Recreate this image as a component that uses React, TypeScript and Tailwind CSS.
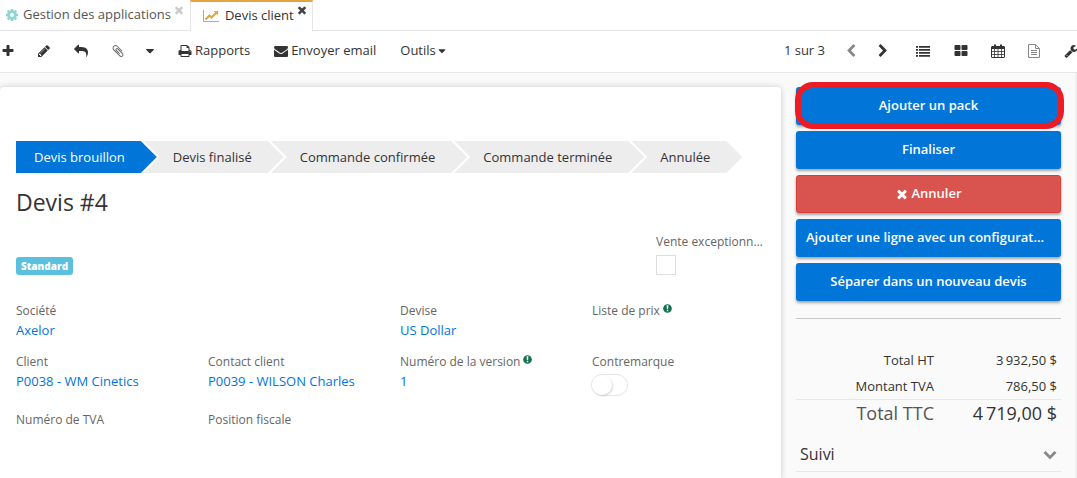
import { useState } from 'react';
import type { ReactNode } from 'react';
import clsx from 'clsx';

const paths = {
  times:
    'M1490 1322q0 40-28 68l-136 136q-28 28-68 28t-68-28l-294-294-294 294q-28 28-68 28t-68-28l-136-136q-28-28-28-68t28-68l294-294-294-294q-28-28-28-68t28-68l136-136q28-28 68-28t68 28l294 294 294-294q28-28 68-28t68 28l136 136q28 28 28 68t-28 68l-294 294 294 294q28 28 28 68z',
  plus: 'M1600 736v192q0 40-28 68t-68 28h-416v416q0 40-28 68t-68 28h-192q-40 0-68-28t-28-68v-416h-416q-40 0-68-28t-28-68v-192q0-40 28-68t68-28h416v-416q0-40 28-68t68-28h192q40 0 68 28t28 68v416h416q40 0 68 28t28 68z',
  pencil:
    'M491 1536l91-91-235-235-91 91v107h128v128h107zm523-928q0-22-22-22-10 0-17 7l-542 542q-7 7-7 17 0 22 22 22 10 0 17-7l542-542q7-7 7-17zm-54-192l416 416-832 832h-416v-416zm683 96q0 53-37 90l-166 166-416-416 166-165q36-38 90-38 53 0 91 38l235 234q37 39 37 91z',
  forward:
    'M1792 640q0 26-19 45l-512 512q-19 19-45 19t-45-19-19-45v-256h-224q-98 0-175.5 6t-154 21.5-133 42.5-105.5 69.5-80 101-48.5 138.500-17.500 181q0 55 5 123 0 6 2.500 23.500t2.500 26.500q0 15-8.500 25t-23.500 10q-16 0-28-17-7-9-13-22t-13.500-30-10.500-24q-127-285-127-451 0-199 53-333 162-403 875-403h224v-256q0-26 19-45t45-19 45 19l512 512q19 19 19 45z',
  clip: 'M1596 1385q0 117-79 196t-196 79q-135 0-235-100l-777-776q-113-115-113-271 0-159 110-270t269-111q158 0 273 113l605 606q10 10 10 22 0 16-30.500 46.500t-46.500 30.500q-13 0-23-10l-606-607q-79-77-181-77-106 0-179 75t-73 181q0 105 76 181l776 777q63 63 145 63 64 0 106-42t42-106q0-82-63-145l-581-581q-26-24-60-24-29 0-48 19t-19 48q0 32 25 59l410 410q10 10 10 22 0 16-31 47t-47 31q-12 0-22-10l-410-410q-63-61-63-149 0-82 57-139t139-57q88 0 149 63l581 581q100 98 100 235z',
  print:
    'M448 1536h896v-256h-896v256zm0-640h896v-384h-160q-40 0-68-28t-28-68v-160h-640v640zm1152 64q0-26-19-45t-45-19-45 19-19 45 19 45 45 19 45-19 19-45zm128 0v416q0 13-9.500 22.500t-22.500 9.500h-224v160q0 40-28 68t-68 28h-960q-40 0-68-28t-28-68v-160h-224q-13 0-22.500-9.500t-9.500-22.500v-416q0-79 56.500-135.500t135.500-56.500h64v-544q0-40 28-68t68-28h672q40 0 88 20t76 48l152 152q28 28 48 76t20 88v256h64q79 0 135.500 56.500t56.500 135.500z',
  mail: 'M1792 710v794q0 66-47 113t-113 47h-1472q-66 0-113-47t-47-113v-794q44 49 101 87 362 246 497 345 57 42 92.500 65.500t94.500 48 110 24.500h2q51 0 110-24.500t94.500-48 92.500-65.500q170-123 498-345 57-39 100-87zm0-294q0 79-49 151t-122 123q-376 261-468 325-10 7-42.500 31t-54 38.500-52 32.500-57.500 27-50 9h-2q-23 0-50-9t-57.500-27-52-32.500-54-38.500-42.500-31q-91-64-262-182.500t-205-142.500q-62-42-117-115.500t-55-136.500q0-78 41.500-130t118.500-52h1472q65 0 112.500 47t47.500 113z',
  caret: 'M1408 704q0 26-19 45l-448 448q-19 19-45 19t-45-19l-448-448q-19-19-19-45t19-45 45-19h896q26 0 45 19t19 45z',
  left: 'M1427 301l-531 531 531 531q19 19 19 45t-19 45l-166 166q-19 19-45 19t-45-19l-742-742q-19-19-19-45t19-45l742-742q19-19 45-19t45 19l166 166q19 19 19 45t-19 45z',
  down: 'M1683 808l-742 741q-19 19-45 19t-45-19l-742-741q-19-19-19-45.500t19-45.500l166-165q19-19 45-19t45 19l531 531 531-531q19-19 45-19t45 19l166 165q19 19 19 45.500t-19 45.500z',
  list: 'M0 256h256v232h-256zM384 256h1408v232h-1408zM0 640h256v232h-256zM384 640h1408v232h-1408zM0 1024h256v232h-256zM384 1024h1408v232h-1408zM0 1408h256v232h-256zM384 1408h1408v232h-1408z',
  grid: 'M832 1024v384q0 52-38 90t-90 38h-512q-52 0-90-38t-38-90v-384q0-52 38-90t90-38h512q52 0 90 38t38 90zm0-768v384q0 52-38 90t-90 38h-512q-52 0-90-38t-38-90v-384q0-52 38-90t90-38h512q52 0 90 38t38 90zm896 768v384q0 52-38 90t-90 38h-512q-52 0-90-38t-38-90v-384q0-52 38-90t90-38h512q52 0 90 38t38 90zm0-768v384q0 52-38 90t-90 38h-512q-52 0-90-38t-38-90v-384q0-52 38-90t90-38h512q52 0 90 38t38 90z',
  wrench:
    'M448 1472q0-26-19-45t-45-19-45 19-19 45 19 45 45 19 45-19 19-45zm644-420l-682 682q-37 37-90 37-52 0-91-37l-106-108q-38-36-38-90 0-53 38-91l681-681q39 98 114.500 173.500t173.500 114.500zm634-435q0 39-23 106-47 134-164.500 217.500t-258.500 83.500q-185 0-316.500-131.500t-131.500-316.500 131.500-316.500 316.500-131.500q58 0 121.500 16.500t107.500 46.500q16 11 16 28t-16 28l-293 169v224l193 107q5-3 79-48.500t135.500-81 70.500-35.500q15 0 23.500 10t8.500 25z',
};

type IconProps = { name: keyof typeof paths; className?: string };

const Icon = ({ name, className = 'size-3.5' }: IconProps) => (
  <svg
    viewBox="0 0 1792 1792"
    fill="currentColor"
    aria-hidden="true"
    className={clsx('shrink-0', className)}
  >
    <path d={paths[name]} />
  </svg>
);

const GearIcon = () => (
  <svg viewBox="0 0 14 14" className="size-3.5 shrink-0 text-[#8fd6d2]" aria-hidden="true">
    <g stroke="currentColor" strokeWidth="2.600">
      <path d="M7 1v12M1 7h12M2.700 2.700l8.600 8.600M11.300 2.700l-8.600 8.600" />
    </g>
    <circle cx="7" cy="7" r="4.800" fill="currentColor" />
    <circle cx="7" cy="7" r="2" fill="#fff" />
  </svg>
);

const ChartIcon = () => (
  <svg viewBox="0 0 2048 1792" fill="currentColor" className="h-3.5 w-4 shrink-0 text-[#e2a53f]" aria-hidden="true">
    <path d="M2048 1536v128h-2048v-1536h128v1408h1920zm-128-1248v435q0 21-19.500 29.500t-35.500-7.500l-121-121-633 633q-10 10-23 10t-23-10l-233-233-416 416-192-192 585-585q10-10 23-10t23 10l233 233 464-464-121-121q-16-16-7.500-35.500t29.500-19.500h435q14 0 23 9t9 23z" />
  </svg>
);

const CalendarIcon = () => (
  <svg viewBox="0 0 14 14" fill="none" stroke="currentColor" className="size-3.5" aria-hidden="true">
    <rect x="0.500" y="2.500" width="13" height="11" rx="0.500" />
    <path d="M0.500 3.500h13M0.500 4.500h13" />
    <path d="M3.500 5v8.500M7 5v8.500M10.500 5v8.500M1 7.500h12M1 10.500h12" strokeWidth="0.800" />
    <path d="M4 0.500v3M10 0.500v3" strokeWidth="2" />
  </svg>
);

const FileIcon = () => (
  <svg viewBox="0 0 14 14" fill="none" stroke="currentColor" className="size-3.5" aria-hidden="true">
    <path d="M1.500 0.500h7l4 4v9h-11zM8.500 0.500v4h4M4 6.500h6M4 8.500h6M4 10.500h6" />
  </svg>
);

const InfoIcon = () => (
  <svg viewBox="0 0 10 10" className="mb-1.5 ml-[3px] inline size-[9px]" aria-hidden="true">
    <circle cx="5" cy="5" r="4.800" fill="#12734f" />
    <path d="M4 1.500h2l-.3 4h-1.400zM4.200 6.500h1.600v1.600h-1.600z" fill="#fff" />
  </svg>
);

const steps = ['Devis finalisé', 'Commande confirmée', 'Commande terminée', 'Annulée'];

const totals = [
  { label: 'Total HT', value: '3\u2009932,50 $' },
  { label: 'Montant TVA', value: '786,50 $' },
];

type FieldProps = { label: string; info?: boolean; className?: string; children?: ReactNode };

const Field = ({ label, info, className, children }: FieldProps) => (
  <div className={clsx('col-span-3', className)}>
    <div className="text-xs leading-5 text-[#666]">
      {label}
      {info && <InfoIcon />}
    </div>
    {children}
  </div>
);

const Link = ({ children }: { children: ReactNode }) => (
  <a href="#" className="block text-[13px] leading-[18px] text-[#0275d8]">
    {children}
  </a>
);

const ToolButton = ({ label, className, children }: { label: string; className?: string; children: ReactNode }) => (
  <button type="button" aria-label={label} className={clsx('flex w-4 justify-center', className)}>
    {children}
  </button>
);

const ActionButton = ({ danger, children }: { danger?: boolean; children: ReactNode }) => (
  <button
    type="button"
    className={clsx(
      'h-[38px] w-full truncate rounded-[3px] px-2.5 text-[13px] font-semibold text-white shadow-[0_2px_3px_rgba(0,0,0,0.35)]',
      danger ? 'border border-[#d43f3a] bg-[#d9534f]' : 'bg-[#0275d8]',
    )}
  >
    {children}
  </button>
);

const Tabs = () => (
  <nav className="flex h-[31px] text-[13px]">
    <div className="flex border-b border-[#e5e5e5] px-[5px]">
      <a href="#" className="flex items-center gap-1 text-[#555]">
        <GearIcon />
        Gestion des applications
      </a>
      <button type="button" aria-label="Fermer Gestion des applications" className="ml-0.5 h-5 text-[#ccc]">
        <Icon name="times" className="size-3" />
      </button>
    </div>
    <div className="flex border-x border-t-2 border-x-[#e5e5e5] border-t-[#e2a53f] pl-3 pr-1">
      <a href="#" className="flex items-center gap-1.5 pb-0.5 text-[#333]">
        <ChartIcon />
        Devis client
      </a>
      <button type="button" aria-label="Fermer Devis client" className="ml-0.5 h-4 text-[#444]">
        <Icon name="times" className="size-3" />
      </button>
    </div>
    <div className="flex-1 border-b border-[#e5e5e5]" />
  </nav>
);

const Toolbar = () => (
  <div className="flex h-[42px] items-center justify-between overflow-hidden border-b border-[#e8e8e8] pb-0.5 text-[13px]">
    <div className="flex items-center">
      <ToolButton label="Nouveau"><Icon name="plus" /></ToolButton>
      <ToolButton label="Modifier" className="ml-5"><Icon name="pencil" /></ToolButton>
      <ToolButton label="Retour" className="ml-[21px]"><Icon name="forward" className="size-3.5 -scale-x-100" /></ToolButton>
      <ToolButton label="Pièces jointes" className="ml-[21px] text-[#666]"><Icon name="clip" /></ToolButton>
      <ToolButton label="Plus" className="ml-4"><Icon name="caret" /></ToolButton>
      <button type="button" className="ml-5 flex items-center gap-[3px]">
        <Icon name="print" />
        Rapports
      </button>
      <button type="button" className="ml-6 flex items-center gap-[3px]">
        <Icon name="mail" />
        Envoyer email
      </button>
      <button type="button" className="ml-6 flex items-center">
        Outils
        <Icon name="caret" className="size-3" />
      </button>
    </div>
    <div className="-mr-0.5 flex shrink-0 items-center">
      <span>1 sur 3</span>
      <ToolButton label="Précédent" className="ml-[18px] text-[#888]"><Icon name="left" /></ToolButton>
      <ToolButton label="Suivant" className="ml-4"><Icon name="left" className="size-3.5 -scale-x-100" /></ToolButton>
      <ToolButton label="Liste" className="ml-6"><Icon name="list" /></ToolButton>
      <ToolButton label="Cartes" className="ml-[22px]"><Icon name="grid" /></ToolButton>
      <ToolButton label="Calendrier" className="ml-[21px]"><CalendarIcon /></ToolButton>
      <ToolButton label="Formulaire" className="ml-5 text-[#888]"><FileIcon /></ToolButton>
      <ToolButton label="Réglages" className="ml-[21px]"><Icon name="wrench" /></ToolButton>
    </div>
  </div>
);

const StatusBar = () => (
  <ol className="flex text-[13px] leading-8">
    <li className="bg-[#0275d8] pl-[18px] pr-8 text-white [clip-path:polygon(0_0,calc(100%-16px)_0,100%_50%,calc(100%-16px)_100%,0_100%)]">
      Devis brouillon
    </li>
    {steps.map((step) => (
      <li
        key={step}
        className="-ml-[13px] bg-[#ededed] pl-[29px] pr-8 [clip-path:polygon(0_0,calc(100%-16px)_0,100%_50%,calc(100%-16px)_100%,0_100%,16px_50%)]"
      >
        {step}
      </li>
    ))}
  </ol>
);

const App = () => {
  const [exceptional, setExceptional] = useState(false);
  const [backToBack, setBackToBack] = useState(false);

  return (
    <div className="flex min-h-screen flex-col bg-white font-['Open_Sans',sans-serif] text-[#333]">
      <Tabs />
      <Toolbar />
      <div className="flex flex-1 border-r-2 border-[#f0f0f0] bg-[#fafafa] pr-3.5 pt-3.5">
        <main className="min-w-0 flex-1 rounded-t bg-white pl-4 pr-[13px] pt-[54px] shadow-[0_0_6px_rgba(0,0,0,0.2)]">
          <StatusBar />
          <h1 className="mt-[13px] text-[23px] leading-8">Devis #4</h1>

          <div className="mt-3.5 grid grid-cols-12 gap-x-4">
            <div className="col-span-10 flex items-end">
              <span className="rounded-[3px] bg-[#5bc0de] px-[5px] text-[10px] font-extrabold leading-[18px] text-white">
                Standard
              </span>
            </div>
            <div className="col-span-2">
              <label htmlFor="exceptional" className="block truncate text-xs leading-5 text-[#666]">
                Vente exceptionnelle
              </label>
              <input
                id="exceptional"
                type="checkbox"
                checked={exceptional}
                onChange={(e) => setExceptional(e.target.checked)}
                className="mt-[3px] block size-5 appearance-none border border-[#ddd] bg-white checked:bg-[#0275d8]"
              />
            </div>
          </div>

          <div className="mt-[26px] grid grid-cols-12 gap-x-4 gap-y-[13px]">
            <Field label="Société" className="col-span-6"><Link>Axelor</Link></Field>
            <Field label="Devise"><Link>US Dollar</Link></Field>
            <Field label="Liste de prix" info />
            <Field label="Client"><Link>P0038 - WM Cinetics</Link></Field>
            <Field label="Contact client"><Link>P0039 - WILSON Charles</Link></Field>
            <Field label="Numéro de la version" info><Link>1</Link></Field>
            <div className="col-span-3 h-[45px]">
              <label htmlFor="backToBack" className="block text-xs leading-5 text-[#666]">
                Contremarque
              </label>
              <input
                id="backToBack"
                type="checkbox"
                role="switch"
                checked={backToBack}
                onChange={(e) => setBackToBack(e.target.checked)}
                className="-ml-px mt-0.5 flex h-[22px] w-[37px] appearance-none items-center rounded-full border border-[#e5e5e5] bg-white before:size-5 before:rounded-full before:bg-white before:shadow-[1px_1px_2px_rgba(0,0,0,0.15)] checked:justify-end checked:bg-[#0275d8]"
              />
            </div>
            <Field label="Numéro de TVA" />
            <Field label="Position fiscale" />
          </div>
        </main>

        <aside className="ml-[15px] w-[265px] shrink-0">
          <div className="flex flex-col gap-1.5">
            <div className="relative">
              <ActionButton>Ajouter un pack</ActionButton>
              <div className="pointer-events-none absolute -bottom-1 -left-px -right-[3px] -top-[5px] rounded-[18px] border-6 border-[#ed1c24]" />
            </div>
            <ActionButton>Finaliser</ActionButton>
            <ActionButton danger>
              <Icon name="times" className="mb-0.5 mr-0.5 inline size-3.5" />
              Annuler
            </ActionButton>
            <ActionButton>Ajouter une ligne avec un configurateur</ActionButton>
            <ActionButton>Séparer dans un nouveau devis</ActionButton>
          </div>

          <table className="mt-[17px] w-full border-t border-[#c8c8c8] text-right text-[13px]">
            <tbody>
              <tr>
                <td className="h-[29px]" />
              </tr>
              {totals.map(({ label, value }) => (
                <tr key={label}>
                  <th scope="row" className="h-[26px] w-[138px] font-normal">{label}</th>
                  <td className="pr-1">{value}</td>
                </tr>
              ))}
              <tr className="border-t border-[#e8e8e8] text-lg leading-[26px]">
                <th scope="row" className="font-normal text-[#555]">Total TTC</th>
                <td className="pr-1 font-medium">{'4\u2009719,00 $'}</td>
              </tr>
            </tbody>
          </table>

          <button
            type="button"
            className="mt-2.5 flex h-9 w-full items-center justify-between border-b border-[#e8e8e8] px-1 text-base"
          >
            Suivi
            <Icon name="down" className="size-3.5 text-[#888]" />
          </button>
        </aside>
      </div>
    </div>
  );
};

export default App;
